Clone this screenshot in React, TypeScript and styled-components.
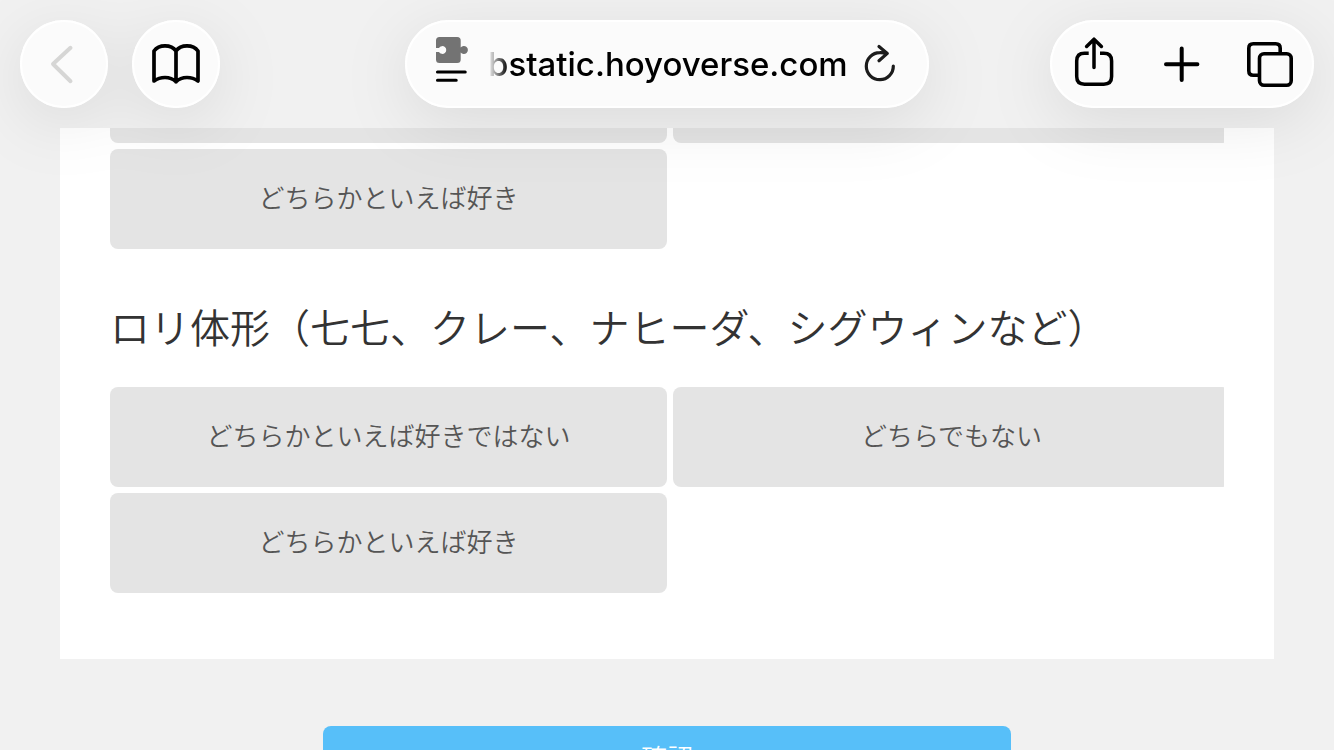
import React from 'react';
import styled, { createGlobalStyle } from 'styled-components';

const GlobalStyle = createGlobalStyle`
  * { box-sizing: border-box; }
  body {
    margin: 0;
    background: #f1f1f1;
    font-family: 'Noto Sans CJK JP', 'Noto Sans', sans-serif;
    font-weight: 350;
  }
  button, input {
    margin: 0;
    padding: 0;
    border: 0;
    background: none;
    color: inherit;
    font: inherit;
  }
`;

const Page = styled.div`
  display: flex;
  flex-direction: column;
  height: 100vh;
  overflow: hidden;
`;

const BrowserBar = styled.header`
  position: relative;
  z-index: 1;
  flex: none;
  display: grid;
  grid-template-columns: 1fr minmax(0, 524px) 1fr;
  padding: 20px;
  background: #f1f1f1;
`;

const BarGroup = styled.div<{ $end?: boolean }>`
  display: flex;
  gap: 24px;
  justify-content: ${(p) => (p.$end ? 'flex-end' : 'flex-start')};
  filter: drop-shadow(0 14px 32px rgba(0, 0, 0, 0.09));
`;

const Pill = styled.div`
  display: flex;
  align-items: center;
  height: 88px;
  border-radius: 44px;
  background: #fbfbfb;
  box-shadow: inset 0 0 0 2px #fff;
`;

const AddressPill = styled(Pill)`
  gap: 14px;
  padding: 0 29px;
  filter: drop-shadow(0 14px 32px rgba(0, 0, 0, 0.09));
`;

const ToolButton = styled.button`
  display: block;
  width: 88px;
  height: 88px;
  color: #000;

  &:disabled { color: #d6d6d5; }
`;

const AddressButton = styled.button`
  flex: none;
  display: flex;
  color: #1c1c1c;
`;

const AddressInput = styled.input`
  flex: 1;
  min-width: 0;
  height: 48px;
  padding-left: 4px;
  color: #000;
  font-family: Inter, 'Liberation Sans', sans-serif;
  font-size: 33px;
  font-weight: 500;
  outline: none;
  mask-image: linear-gradient(to right, transparent 4px, #000 24px);
`;

const Icon = styled.svg`
  display: block;
  fill: none;
  stroke: currentColor;
  stroke-linecap: round;
  stroke-linejoin: round;
`;

const Survey = styled.main`
  flex: 1;
  min-height: 0;
  overflow: hidden;
  padding: 0 60px;
`;

const Panel = styled.section`
  padding: 0 50px 66px;
  background: #fff;
`;

const Question = styled.h2`
  margin: 48px 0 32px;
  color: #333;
  font-size: 40px;
  font-weight: 350;
  line-height: 58px;
`;

const Options = styled.div<{ $scrolled?: boolean }>`
  display: grid;
  grid-template-columns: 50% 50%;
  gap: 6px;
  overflow: hidden;
  margin-top: ${(p) => (p.$scrolled ? '-85px' : '0')};
`;

const Option = styled.button`
  height: 100px;
  padding-bottom: 4px;
  border-radius: 8px;
  background: #e4e4e4;
  color: #555;
  font-size: 26px;
  line-height: 40px;
`;

const Confirm = styled.button`
  display: block;
  width: 688px;
  max-width: 100%;
  height: 62px;
  margin: 67px auto 0;
  border-radius: 8px;
  background: #57bff9;
  color: #fff;
  font-size: 26px;
  line-height: 40px;
`;

const answers = ['どちらかといえば好きではない', 'どちらでもない', 'どちらかといえば好き'];

function AnswerList({ label, scrolled }: { label: string; scrolled?: boolean }) {
  return (
    <Options role="group" aria-label={label} $scrolled={scrolled}>
      {answers.map((a) => (
        <Option type="button" key={a}>{a}</Option>
      ))}
    </Options>
  );
}

const BackIcon = () => (
  <Icon width="88" height="88" viewBox="0 0 88 88" strokeWidth="4">
    <path d="M50.5 27.8 33 44l17.5 17.2" />
  </Icon>
);

const BookIcon = () => (
  <Icon width="88" height="88" viewBox="0 0 88 88" strokeWidth="3.7">
    <path d="M44 31C41.6 27.6 37.6 25.9 33 25.9S24.4 27.7 22 31V61C25 58.8 28.5 57.5 33 57.5S41.5 59.3 44 61.8C46.5 59.3 50.5 57.5 55 57.5S63 58.8 66 61V31C63.6 27.7 59.6 25.9 55 25.9S46.4 27.6 44 31V61.8" />
  </Icon>
);

const ShareIcon = () => (
  <Icon width="88" height="88" viewBox="0 0 88 88" strokeWidth="3.5">
    <path strokeLinecap="butt" d="M38.7 33.3H34.5Q26.7 33.3 26.7 41V56.6Q26.7 64.3 34.5 64.3H53.8Q61.6 64.3 61.6 56.6V41Q61.6 33.3 53.8 33.3H50" />
    <path d="M44 47.5V20M36.6 26.5 44 19.2 51.4 26.5" />
  </Icon>
);

const PlusIcon = () => (
  <Icon width="88" height="88" viewBox="0 0 88 88" strokeWidth="4">
    <path d="M28 44.2H59.4M43.7 28.4V60" />
  </Icon>
);

const TabsIcon = () => (
  <Icon width="88" height="88" viewBox="0 0 88 88" strokeWidth="3.6">
    <rect x="33.5" y="33.7" width="31.7" height="31.6" rx="4.5" />
    <path strokeLinecap="butt" d="M54.2 32V28.3Q54.2 23.8 49.7 23.8H27.3Q22.8 23.8 22.8 28.3V50.7Q22.8 55.2 27.3 55.2H32" />
  </Icon>
);

const SiteIcon = () => (
  <Icon width="36" height="58" viewBox="0 0 36 58">
    <path
      fill="#737373"
      stroke="none"
      d="M5.5 2H23.2Q26.7 2 26.7 5.5V12.6A4 4 0 1 1 26.7 17.4V24.5Q26.7 28 23.2 28H5.5Q2 28 2 24.5V17H5A3.9 3.9 0 1 0 5 13H2V5.5Q2 2 5.5 2Z"
    />
    <path stroke="#000" strokeWidth="3.1" d="M3.5 37H31.2M3.5 45.3H22.2" />
  </Icon>
);

const ReloadIcon = () => (
  <Icon width="40" height="48" viewBox="0 0 40 48" strokeWidth="3.2">
    <path d="M33.3 26A13.5 13.5 0 1 1 19.8 12.7Q23.5 12.6 27 13.4M19 6.5 27.3 13.4 19 20.7" />
  </Icon>
);

export default function App() {
  return (
    <Page>
      <GlobalStyle />
      <BrowserBar>
        <BarGroup>
          <Pill>
            <ToolButton type="button" aria-label="戻る" disabled><BackIcon /></ToolButton>
          </Pill>
          <Pill>
            <ToolButton type="button" aria-label="ブックマーク"><BookIcon /></ToolButton>
          </Pill>
        </BarGroup>
        <AddressPill>
          <AddressButton type="button" aria-label="ページ設定"><SiteIcon /></AddressButton>
          <AddressInput type="text" aria-label="アドレス" defaultValue="bstatic.hoyoverse.com" />
          <AddressButton type="button" aria-label="再読み込み"><ReloadIcon /></AddressButton>
        </AddressPill>
        <BarGroup $end>
          <Pill>
            <ToolButton type="button" aria-label="共有"><ShareIcon /></ToolButton>
            <ToolButton type="button" aria-label="新規タブ"><PlusIcon /></ToolButton>
            <ToolButton type="button" aria-label="タブ一覧"><TabsIcon /></ToolButton>
          </Pill>
        </BarGroup>
      </BrowserBar>
      <Survey>
        <Panel>
          <AnswerList label="前の質問" scrolled />
          <Question>ロリ体形（七七、クレー、ナヒーダ、シグウィンなど）</Question>
          <AnswerList label="ロリ体形" />
        </Panel>
        <Confirm type="button">確認</Confirm>
      </Survey>
    </Page>
  );
}
